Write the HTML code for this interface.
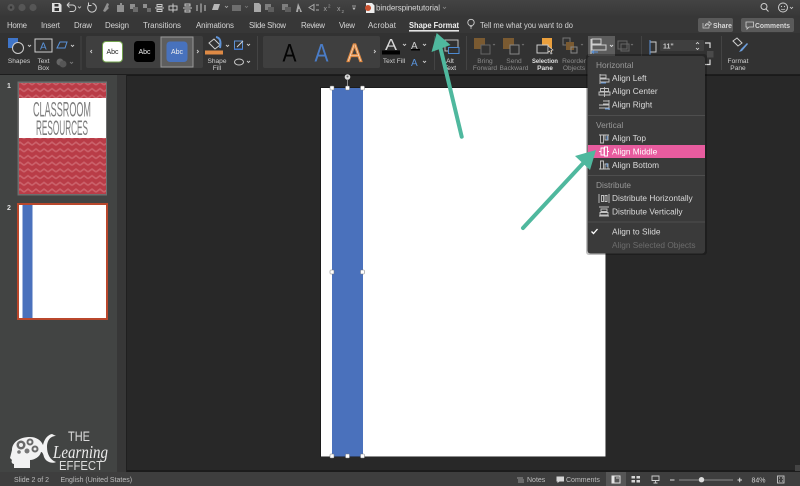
<!DOCTYPE html>
<html lang="en"><head><meta charset="utf-8"><title>binderspinetutorial</title>
<style>
html,body{margin:0;padding:0;background:#282828;width:800px;height:486px;overflow:hidden}
svg{display:block;font-family:"Liberation Sans",sans-serif;filter:blur(.3px)}
text{fill:#d8d8d8;font-size:8px}
.tab{font-size:7.9px;fill:#d4d4d4}
.sm{font-size:6.6px;fill:#cfcfcf;text-anchor:middle}
.dim{fill:#8a8a8a}
.mi{font-size:8.3px;fill:#dcdcdc}
.mh{font-size:8.3px;fill:#9a9a9a}
.ic{fill:none;stroke:#cfcfcf;stroke-width:1}
.st{font-size:7px;fill:#bdbdbd}
</style></head><body>
<svg width="800" height="486" viewBox="0 0 800 486" xmlns="http://www.w3.org/2000/svg">
<defs>
<linearGradient id="top" x1="0" y1="0" x2="0" y2="1"><stop offset="0" stop-color="#434343"/><stop offset="1" stop-color="#383838"/></linearGradient>
<pattern id="chev" width="8" height="6.7" patternUnits="userSpaceOnUse"><rect width="8" height="6.700" fill="#b93c47"/><path d="M0 4.500 L4 1.500 L8 4.500" fill="none" stroke="#cb626b" stroke-width="1.600"/></pattern>
</defs>

<!-- chrome -->
<rect width="800" height="16" fill="url(#top)"/>
<rect y="16" width="800" height="17" fill="#373737"/>
<rect y="33" width="800" height="41" fill="#323232"/>
<rect y="74" width="800" height="1" fill="#1d1d1d"/>

<!-- traffic lights -->
<circle cx="11" cy="7.5" r="3.6" fill="#565656"/><circle cx="11" cy="7.5" r="1.2" fill="#333"/>
<circle cx="22" cy="7.5" r="3.6" fill="#565656"/><circle cx="33" cy="7.5" r="3.6" fill="#565656"/>

<!-- QAT -->
<g class="ic" stroke-width="1.1">
<path d="M52.500 3.500h7l1.500 1.500v6.500h-8.500z" fill="#ddd" stroke="#ddd"/><rect x="54.500" y="4" width="4" height="2.500" fill="#333" stroke="none"/><rect x="54.500" y="8" width="4.500" height="3" fill="#333" stroke="none"/>
<path d="M67 5h5.500a3 3 0 0 1 0 6.500h-3M67 5l2.500-2.500M67 5l2.500 2.500"/>
<path d="M78 6.500l1.500 1.500 1.500-1.500" stroke-width=".8"/>
<path d="M92.500 3.500a4.300 4.300 0 1 1-3.800 1.500M88.500 2.500v3h3"/>
</g>
<g fill="#8f8f8f">
<path d="M103 11l4-8 2 1-1 3 1 1-4 4z"/><path d="M117 5h3v-2h2v2h2v7h-7z"/>
<rect x="130" y="4" width="5" height="5"/><rect x="133" y="7" width="5" height="5" fill="#6a6a6a"/>
<rect x="143" y="4" width="4" height="4"/><rect x="147" y="8" width="4" height="4" fill="#6a6a6a"/>
</g>
<g fill="none" stroke="#c8c8c8" stroke-width="1">
<path d="M155 8h9M157 4.500h5v2h-5zM157 9.500h5v2h-5z"/>
<path d="M173 3.500v9M169 6h8v4h-8z"/>
<path d="M183 8h9M185 4h5v2h-5zM185 10h5v2h-5z"/>
<path d="M197 5v6M201 3.500v9M205 5v6"/>
</g>
<g fill="#b5b5b5"><path d="M212 10l2-6h6l-2 6z"/><path d="M225 6l1.500 1.500 1.500-1.500" fill="none" stroke="#aaa" stroke-width=".8"/></g>
<g fill="#6e6e6e"><rect x="232" y="5" width="9" height="6"/><path d="M245 6l1.500 1.500 1.500-1.500" fill="none" stroke="#777" stroke-width=".8"/></g>
<g fill="#a8a8a8"><path d="M254 3h5l2 2v7h-7z"/></g>
<g fill="#7e7e7e"><rect x="265" y="4" width="6" height="6"/><rect x="268" y="7" width="6" height="5" fill="#5e5e5e"/><rect x="282" y="4" width="6" height="6"/><rect x="285" y="7" width="6" height="5" fill="#5e5e5e"/></g>
<path d="M298 3l-2 9h2l.5-3h1l.5 3h2z" fill="#a9a9a9"/>
<path d="M309 7.500l5-3v6zM316 5h3M316 10h3" fill="none" stroke="#a9a9a9"/>
<text x="323.500" y="11" style="font-size:7px;fill:#a5a5a5">x</text><text x="328" y="7.500" style="font-size:4.500px;fill:#a5a5a5">2</text>
<text x="337" y="11" style="font-size:7px;fill:#a5a5a5">x</text><text x="341.500" y="13" style="font-size:4.500px;fill:#a5a5a5">2</text>
<path d="M352 6h4M353 8l1 1.500 1-1.500z" stroke="#bbb" fill="#bbb" stroke-width=".7"/>
<!-- file icon + title -->
<path d="M366 3h6l2.500 2.500v7.500h-8.500z" fill="#eee"/><circle cx="368" cy="8" r="3" fill="#c9502e"/>
<text x="376" y="10.700" textLength="64" style="font-size:8px;fill:#d6d6d6">binderspinetutorial</text>
<path d="M443 7l1.500 1.500 1.500-1.500" fill="none" stroke="#888" stroke-width=".8"/>
<!-- top right -->
<circle cx="764" cy="6.500" r="3" fill="none" stroke="#cfcfcf"/><path d="M766 9l2.500 2.500" stroke="#cfcfcf"/>
<circle cx="783" cy="7.500" r="4.500" fill="none" stroke="#cfcfcf"/><circle cx="781.500" cy="6.500" r=".6" fill="#cfcfcf"/><circle cx="784.500" cy="6.500" r=".6" fill="#cfcfcf"/><path d="M781 9q2 1.500 4 0" fill="none" stroke="#cfcfcf" stroke-width=".7"/>
<path d="M790 7l1.500 1.500 1.500-1.500" fill="none" stroke="#cfcfcf" stroke-width=".8"/>

<!-- tabs -->
<g class="tabs">
<text class="tab" x="7" y="27.800" textLength="20">Home</text>
<text class="tab" x="41" y="27.800" textLength="19">Insert</text>
<text class="tab" x="74" y="27.800" textLength="18">Draw</text>
<text class="tab" x="105" y="27.800" textLength="24">Design</text>
<text class="tab" x="143" y="27.800" textLength="38">Transitions</text>
<text class="tab" x="196" y="27.800" textLength="38">Animations</text>
<text class="tab" x="249" y="27.800" textLength="37">Slide Show</text>
<text class="tab" x="301" y="27.800" textLength="24">Review</text>
<text class="tab" x="339" y="27.800" textLength="16">View</text>
<text class="tab" x="368" y="27.800" textLength="28">Acrobat</text>
<text class="tab" x="409" y="27.800" textLength="50" lengthAdjust="spacingAndGlyphs" style="font-weight:bold;fill:#f0f0f0">Shape Format</text>
</g>
<rect x="409" y="30" width="50" height="1.600" fill="#e4e4e4"/>
<circle cx="471" cy="22.500" r="3.200" fill="none" stroke="#cfcfcf" stroke-width=".9"/><path d="M469.800 26.500h2.400M470 28h2" stroke="#cfcfcf" stroke-width=".8"/>
<text class="tab" x="480" y="27.800" textLength="93" lengthAdjust="spacingAndGlyphs">Tell me what you want to do</text>
<rect x="698" y="18" width="35" height="14" rx="2" fill="#5a5a5a"/>
<path d="M703 23v5h6v-2M705 26q.5-3 4-3v-1.500l2.500 2.500-2.500 2v-1.500q-2.500 0-4 1.500z" fill="none" stroke="#d0d0d0" stroke-width=".7"/>
<text x="713" y="28" textLength="19" lengthAdjust="spacingAndGlyphs" style="font-size:7.500px;font-weight:bold;fill:#d6d6d6">Share</text>
<rect x="741" y="18" width="53" height="14" rx="2" fill="#5a5a5a"/>
<path d="M746 22h7.500v5h-4.500l-2 2v-2h-1z" fill="none" stroke="#d0d0d0" stroke-width=".8"/>
<text x="755" y="28" textLength="35" lengthAdjust="spacingAndGlyphs" style="font-size:7.500px;font-weight:bold;fill:#d6d6d6">Comments</text>

<!-- ribbon: Shapes -->
<rect x="8" y="38" width="10" height="10" fill="#3f75c9"/><circle cx="18" cy="48" r="5.500" fill="#323232" stroke="#cfcfcf"/>
<path d="M28 45l1.500 1.500 1.500-1.500" fill="none" stroke="#ccc" stroke-width=".9"/>
<text class="sm" x="19" y="63">Shapes</text>
<rect x="35" y="39" width="17" height="13" fill="none" stroke="#cfcfcf"/><text x="40" y="49.500" style="font-size:10px;fill:#5a93da">A</text>
<text class="sm" x="43.500" y="63">Text</text><text class="sm" x="43.500" y="70">Box</text>
<path d="M57 48l3-6h7l-2 6z" fill="none" stroke="#5a93da"/><path d="M71 45l1.500 1.500 1.500-1.500" fill="none" stroke="#ccc" stroke-width=".9"/>
<circle cx="60" cy="62" r="3.500" fill="#666"/><circle cx="63" cy="64" r="3.500" fill="#565656"/><path d="M70 62l1.500 1.500 1.500-1.500" fill="none" stroke="#777" stroke-width=".9"/>
<rect x="80.500" y="36" width="1" height="34" fill="#444"/>

<!-- style gallery -->
<rect x="86" y="36" width="117" height="32" rx="2" fill="#3f3f3f"/>
<path d="M92 50l-1.500 1.500 1.500 1.500" fill="none" stroke="#ccc" stroke-width=".9"/>
<rect x="161" y="37" width="32" height="30" fill="#5e5e5e" stroke="#989898"/>
<rect x="102.500" y="41.500" width="20" height="20.500" rx="3.500" fill="#fff" stroke="#72a24c"/>
<text x="112.500" y="54" style="font-size:7px;fill:#222;text-anchor:middle">Abc</text>
<rect x="134" y="41" width="21" height="21" rx="3.500" fill="#000"/>
<text x="144.500" y="54" style="font-size:7px;fill:#eee;text-anchor:middle">Abc</text>
<rect x="166.500" y="41.500" width="21" height="20.500" rx="3.500" fill="#4872bd"/>
<text x="177" y="54" style="font-size:7px;fill:#eee;text-anchor:middle">Abc</text>
<path d="M197 50l1.500 1.500-1.500 1.500" fill="none" stroke="#ccc" stroke-width=".9"/>

<!-- Shape fill -->
<path d="M209 43l5-4 6 6-5 4z" fill="none" stroke="#d0d0d0"/><path d="M216 37q6 1 4 11" fill="none" stroke="#5f93d6" stroke-width="2"/>
<rect x="205" y="50.500" width="18" height="4" fill="#de8a45"/>
<path d="M226 45l1.500 1.500 1.500-1.500" fill="none" stroke="#ccc" stroke-width=".9"/>
<text class="sm" x="217" y="63">Shape</text><text class="sm" x="217" y="70">Fill</text>
<rect x="234.500" y="41" width="8" height="8" fill="none" stroke="#5f93d6"/><path d="M237 47l6-6" stroke="#d0d0d0"/><rect x="234" y="48.500" width="9" height="1.500" fill="#3f75c9"/>
<path d="M247 44l1.500 1.500 1.500-1.500" fill="none" stroke="#ccc" stroke-width=".9"/>
<ellipse cx="239" cy="62" rx="4.500" ry="3" fill="none" stroke="#ccc"/><path d="M247 61l1.500 1.500 1.500-1.500" fill="none" stroke="#ccc" stroke-width=".9"/>
<rect x="257" y="36" width="1" height="34" fill="#444"/>

<!-- WordArt -->
<rect x="263" y="36" width="117" height="32" rx="2" fill="#3f3f3f"/>
<text x="282.500" y="61.500" textLength="14" lengthAdjust="spacingAndGlyphs" style="font-size:25px;fill:#050505">A</text>
<text x="314.500" y="61.500" textLength="14" lengthAdjust="spacingAndGlyphs" style="font-size:25px;fill:#4a7cc6">A</text>
<text x="347" y="61.500" textLength="15" lengthAdjust="spacingAndGlyphs" style="font-size:25px;fill:#f3d5bd;stroke:#e08a42;stroke-width:1.200px">A</text>
<path d="M374 50l1.500 1.500-1.500 1.500" fill="none" stroke="#ccc" stroke-width=".9"/>
<text x="385" y="50" textLength="12" lengthAdjust="spacingAndGlyphs" style="font-size:16px;fill:#d8d8d8">A</text><rect x="382" y="50.500" width="18" height="4" fill="#000"/>
<path d="M403 44l1.500 1.500 1.500-1.500" fill="none" stroke="#ccc" stroke-width=".9"/>
<text class="sm" x="394" y="63">Text Fill</text>
<text x="411" y="49" style="font-size:10px;fill:#cfcfcf">A</text><rect x="411" y="49" width="9" height="1.500" fill="#000"/>
<path d="M423 44l1.500 1.500 1.500-1.500" fill="none" stroke="#ccc" stroke-width=".9"/>
<text x="411" y="66" style="font-size:10px;fill:#5a93da">A</text>
<path d="M423 61l1.500 1.500 1.500-1.500" fill="none" stroke="#ccc" stroke-width=".9"/>
<rect x="434" y="36" width="1" height="34" fill="#444"/>

<!-- Alt text -->
<rect x="445" y="40" width="13" height="11" fill="none" stroke="#bbb"/><rect x="448.500" y="47.500" width="10.500" height="6" fill="#323232" stroke="#4d8ad2"/>
<text class="sm" x="450" y="63" style="fill:#e0e0e0">Alt</text><text class="sm" x="450" y="70" style="fill:#e0e0e0">Text</text>
<rect x="466" y="36" width="1" height="34" fill="#444"/>

<!-- arrange -->
<rect x="474" y="38" width="11" height="11" fill="#7a5a31"/><rect x="481" y="45" width="9" height="9" fill="#323232" stroke="#666"/>
<path d="M493 44l1 1 1-1" fill="none" stroke="#777" stroke-width=".8"/>
<text class="sm dim" x="485" y="63">Bring</text><text class="sm dim" x="485" y="70">Forward</text>
<rect x="503" y="38" width="11" height="11" fill="#7a5a31"/><rect x="510" y="45" width="9" height="9" fill="#323232" stroke="#888"/>
<path d="M522 44l1 1 1-1" fill="none" stroke="#777" stroke-width=".8"/>
<text class="sm dim" x="514" y="63">Send</text><text class="sm dim" x="514" y="70">Backward</text>
<rect x="542" y="38" width="10" height="14" fill="#eba03d"/><rect x="537" y="45" width="11" height="8" fill="#323232" stroke="#ccc"/><path d="M548 46l5 4-2 .5 1 3-1 .5-1.500-3-1.500 1z" fill="#333" stroke="#ccc" stroke-width=".7"/>
<text class="sm" x="545" y="63" textLength="26" lengthAdjust="spacingAndGlyphs" style="font-weight:bold;fill:#e0e0e0">Selection</text><text class="sm" x="545" y="70" style="font-weight:bold;fill:#e0e0e0">Pane</text>
<rect x="563" y="38" width="7" height="7" fill="none" stroke="#777"/><rect x="566" y="42" width="8" height="8" fill="#7a5a31"/><rect x="571" y="47" width="6" height="6" fill="none" stroke="#888"/>
<path d="M581 44l1 1 1-1" fill="none" stroke="#777" stroke-width=".8"/>
<text class="sm dim" x="574" y="63">Reorder</text><text class="sm dim" x="574" y="70">Objects</text>
<rect x="588" y="36" width="27" height="20" fill="#5d5d5d"/>
<path d="M591 39v15" stroke="#cfcfcf"/><rect x="592" y="39" width="9" height="5" fill="none" stroke="#cfcfcf"/><rect x="592" y="45" width="14" height="5" fill="none" stroke="#cfcfcf"/><path d="M598 52h-6m2-1.500l-2 1.500 2 1.500" fill="none" stroke="#5a93da"/>
<path d="M610 45l1.500 1.500 1.500-1.500" fill="none" stroke="#ddd" stroke-width=".9"/>
<rect x="618" y="41" width="9" height="8" fill="none" stroke="#666"/><rect x="621" y="44" width="8" height="7" fill="none" stroke="#666"/>
<path d="M631 44l1 1 1-1" fill="none" stroke="#777" stroke-width=".8"/>
<rect x="641" y="36" width="1" height="34" fill="#444"/>
<path d="M650 42h6v10h-6z" fill="none" stroke="#ccc"/><path d="M650 40v15" stroke="#5a93da"/>
<rect x="660" y="40" width="44" height="11" rx="1" fill="#3f3f3f"/><text x="663" y="48.500" style="font-size:7px;font-weight:bold;fill:#ccc">11"</text>
<path d="M696 44l1.500-1.500 1.500 1.500M696 48l1.500 1.500 1.500-1.500" fill="none" stroke="#ddd" stroke-width=".8"/>
<path d="M705 43h5v5M705 64.500h5v-5" fill="none" stroke="#ddd" stroke-width="1.200"/><rect x="707" y="51" width="6.500" height="6.500" fill="#4a4a4a"/>
<rect x="721" y="36" width="1" height="34" fill="#444"/>
<path d="M733 41l4-3 5 5-4 3z" fill="none" stroke="#d0d0d0"/><path d="M747 43l-6 6-2 3 3-1 6-7z" fill="#6c9edc"/>
<text class="sm" x="738" y="63">Format</text><text class="sm" x="738" y="70">Pane</text>

<!-- left pane -->
<rect y="75" width="117" height="397" fill="#424443"/>
<rect x="117" y="75" width="9" height="397" fill="#373737"/>
<rect x="126" y="75" width="1" height="397" fill="#1f1f1f"/>
<rect x="127" y="75" width="673" height="397" fill="#282828"/>
<rect x="127" y="75" width="673" height="1" fill="#1a1a1a"/>
<rect x="127" y="470" width="673" height="2" fill="#1c1c1c"/>
<rect x="795" y="465" width="5" height="6" fill="#444"/>

<text x="7" y="88" style="font-size:7px;font-weight:bold;fill:#e0e0e0">1</text>
<text x="7" y="210" style="font-size:7px;font-weight:bold;fill:#e0e0e0">2</text>

<rect x="17.500" y="81.500" width="89.500" height="114" fill="#6e6e6e"/>
<rect x="19" y="83" width="87" height="111" fill="url(#chev)"/>
<rect x="19" y="98" width="87" height="40" fill="#fff"/>
<text x="33" y="116.500" textLength="58" lengthAdjust="spacingAndGlyphs" style="font-size:21px;fill:#7c7c7c">CLASSROOM</text>
<text x="36" y="135" textLength="52" lengthAdjust="spacingAndGlyphs" style="font-size:21px;fill:#7c7c7c">RESOURCES</text>

<rect x="18" y="204" width="89" height="115" fill="#fff" stroke="#b9472c" stroke-width="2"/>
<rect x="22.500" y="205" width="10" height="113" fill="#4a71bc"/>

<!-- logo -->
<path d="M12 450C12 442 20 437 30 437C36 437 41 440 43 445C44 440 47 435 52 434L56 436C50 436 47 441 47 447C47 454 50 460 56 462C52 464 46 462 44 457C43 453 42 452 41 452C40 457 34 460 30 460L30 468L14 468L14 464C12 464 11 462 12 460L10 458Z" fill="#f2f2f2"/>
<circle cx="21" cy="445" r="4.500" fill="#6a6a6a"/><circle cx="21" cy="445" r="2" fill="#f2f2f2"/>
<circle cx="30" cy="442" r="3.500" fill="#6a6a6a"/><circle cx="30" cy="442" r="1.500" fill="#f2f2f2"/>
<circle cx="35" cy="449" r="3.500" fill="#6a6a6a"/><circle cx="35" cy="449" r="1.500" fill="#f2f2f2"/>
<circle cx="27" cy="451" r="2.500" fill="#777"/><circle cx="19" cy="452" r="1.800" fill="#777"/>
<text x="68" y="441" textLength="22" lengthAdjust="spacingAndGlyphs" style="font-size:14px;fill:#dcdcdc">THE</text>
<text x="53" y="458" textLength="55" lengthAdjust="spacingAndGlyphs" style="font-size:18px;fill:#ececec;font-family:'Liberation Serif',serif;font-style:italic">Learning</text>
<text x="59" y="470" textLength="44" lengthAdjust="spacingAndGlyphs" style="font-size:13px;fill:#dcdcdc">EFFECT</text>

<!-- slide -->
<rect x="320" y="87" width="286" height="370" fill="#1c1c1c"/>
<rect x="321" y="88" width="284.500" height="368.500" fill="#fff"/>
<rect x="332" y="88" width="31" height="368.500" fill="#4a71bc"/>
<g fill="#fff" stroke="#777" stroke-width=".5">
<rect x="330" y="86" width="4" height="4" rx=".8"/><rect x="345.500" y="86" width="4" height="4" rx=".8"/><rect x="360.500" y="86" width="4" height="4" rx=".8"/>
<rect x="330" y="270" width="4" height="4" rx=".8"/><rect x="360.500" y="270" width="4" height="4" rx=".8"/>
<rect x="330" y="454" width="4" height="4" rx=".8"/><rect x="345.500" y="454" width="4" height="4" rx=".8"/><rect x="360.500" y="454" width="4" height="4" rx=".8"/>
</g>
<path d="M347.500 80v6" stroke="#bbb" stroke-width=".7"/><circle cx="347.500" cy="77" r="2.800" fill="#ddd"/><circle cx="347.500" cy="76.500" r="1" fill="#666"/>

<!-- dropdown menu -->
<rect x="586" y="54" width="121" height="201" rx="3" fill="#000" opacity=".25"/>
<rect x="587.500" y="56" width="117.500" height="197.500" rx="3" fill="#3a3a3a"/>
<text class="mh" x="596" y="68">Horizontal</text>
<text class="mi" x="612" y="81">Align Left</text>
<text class="mi" x="612" y="94">Align Center</text>
<text class="mi" x="612" y="107.500">Align Right</text>
<rect x="588" y="115" width="117" height="1" fill="#4e4e4e"/>
<text class="mh" x="596" y="128">Vertical</text>
<text class="mi" x="612" y="141">Align Top</text>
<rect x="588" y="145" width="117" height="13" fill="#e85c9f"/>
<text class="mi" x="612" y="154.500" style="fill:#fff">Align Middle</text>
<text class="mi" x="612" y="168">Align Bottom</text>
<rect x="588" y="175" width="117" height="1" fill="#4e4e4e"/>
<text class="mh" x="596" y="188">Distribute</text>
<text class="mi" x="612" y="201">Distribute Horizontally</text>
<text class="mi" x="612" y="214.500">Distribute Vertically</text>
<rect x="588" y="221.500" width="117" height="1" fill="#4e4e4e"/>
<text class="mi" x="612" y="234.500">Align to Slide</text>
<text class="mi" x="612" y="248" style="fill:#6c6c6c">Align Selected Objects</text>
<path d="M591.500 231.500l2 2 4-4.500" fill="none" stroke="#fff" stroke-width="1.300"/>
<g fill="none" stroke="#c4c4c4" stroke-width=".9">
<path d="M600 74v10M600 75h6v3h-6M600 79h9v3h-9"/>
<path d="M604.500 87v10M600.500 88.500h8v3h-8zM599 92h11v3h-11z"/>
<path d="M609 100v10M603 101h6v3h-6M599 105h10v3h-10"/>
<path d="M599 135h10M600.500 135v8h3v-8M605 135v5h3v-5"/>
<path d="M599 151.500h2M607 151.500h2M601 148h3v7h-3zM604.500 147h3v9h-3z" stroke="#fff"/>
<path d="M599 169h11M600.500 169v-8h3v8M605 169v-5h3v5"/>
<path d="M599 194v9M609 194v9M601.500 195.500h2v6h-2zM605 195.500h2v6h-2z"/>
<path d="M599 207h10M599 216h10M601 209h6v2.500h-6zM600 212.500h8v2.500h-8z"/>
</g>
<g fill="none" stroke="#5a93da" stroke-width=".9"><path d="M601 83h5M605 109h5M607 136v4M607 167v-4"/></g>

<!-- arrows -->
<g fill="#4fb89e">
<path d="M461.700 136.700L439 42" stroke="#4fb89e" stroke-width="4" stroke-linecap="round" fill="none"/>
<path d="M436.700 33L431.500 52L450.500 45z"/>
<path d="M523 228L588 158" stroke="#4fb89e" stroke-width="4" stroke-linecap="round" fill="none"/>
<path d="M596 150L575 156L590 170z"/>
</g>

<!-- status bar -->
<rect y="472" width="800" height="14" fill="#3e3e3e"/>
<text class="st" x="14" y="482">Slide 2 of 2</text>
<text class="st" x="60.500" y="482">English (United States)</text>
<path d="M517 478h6M518 480h6M518 482h6" stroke="#b5b5b5" stroke-width=".8"/>
<text class="st" x="527" y="482">Notes</text>
<path d="M556.500 476.500h7.500v5h-4.500l-2 1.500v-1.500h-1z" fill="#d6d6d6"/>
<text class="st" x="566" y="482">Comments</text>
<rect x="606" y="472" width="20" height="14" fill="#565656"/>
<rect x="612" y="476" width="8" height="7" fill="none" stroke="#e4e4e4"/><rect x="612" y="476" width="2.500" height="7" fill="#e4e4e4"/><path d="M616 478h3" stroke="#e4e4e4" stroke-width=".8"/>
<g fill="#d6d6d6"><rect x="631.500" y="476" width="3.500" height="2.500"/><rect x="636.500" y="476" width="3.500" height="2.500"/><rect x="631.500" y="480" width="3.500" height="2.500"/><rect x="636.500" y="480" width="3.500" height="2.500"/></g>
<path d="M652 476h7v4.500h-7zM655.500 480.500v2.500M653.500 483h4" fill="none" stroke="#cfcfcf" stroke-width=".9"/>
<path d="M670 480h4.500" stroke="#ddd"/>
<rect x="679" y="479.500" width="54" height="1" fill="#8a8a8a"/>
<circle cx="701.500" cy="479.700" r="2.700" fill="#dcdcdc"/>
<path d="M737.500 480h4.500M739.700 477.700v4.500" stroke="#ddd"/>
<text class="st" x="751.500" y="482.500" style="fill:#cfcfcf">84%</text>
<rect x="777.500" y="476" width="6.500" height="7" fill="none" stroke="#c8c8c8" stroke-width=".9"/><path d="M779 478h1M782 478h1M779 481h1M782 481h1" stroke="#c8c8c8"/>
</svg>
</body></html>
